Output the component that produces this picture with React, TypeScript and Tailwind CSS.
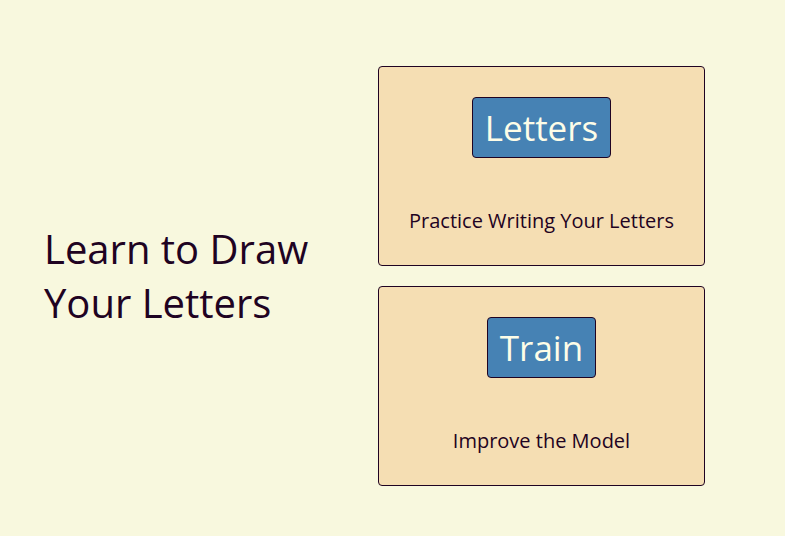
export default function App() {
  const cards = [
    { btn: "Letters", desc: "Practice Writing Your Letters" },
    { btn: "Train", desc: "Improve the Model" },
  ];
  return (
    <div
      className="w-[785px] h-[536px] bg-[#f8f8de] flex items-center pt-[16px] text-[#1f0322]"
      style={{ fontFamily: '"Open Sans", sans-serif' }}
    >
      <div className="w-[378px] pl-[44px] shrink-0">
        <h1 className="text-[40px] leading-[54px] font-medium w-[290px] text-[#1f0322]">
          Learn to Draw Your Letters
        </h1>
      </div>
      <div className="flex flex-col gap-[20px]">
        {cards.map((c) => (
          <div
            key={c.btn}
            className="w-[327px] h-[200px] bg-[#f5deb3] border border-[#1f0322] rounded-[4px] flex flex-col items-center pt-[30px]"
          >
            <button className="bg-[#4682b4] border border-[#1f0322] rounded-[4px] px-[12px] py-[6px] text-[35px] leading-[47px] text-[#fdfde8]">
              {c.btn}
            </button>
            <p className="mt-[49px] text-[20px] leading-[27px]">{c.desc}</p>
          </div>
        ))}
      </div>
    </div>
  );
}
